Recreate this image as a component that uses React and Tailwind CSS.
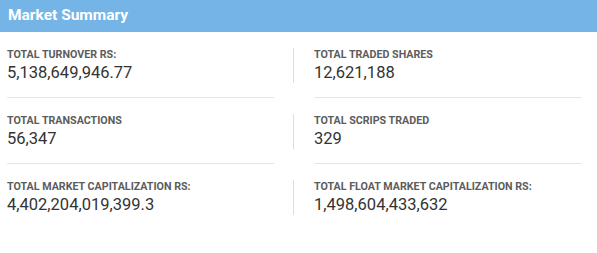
import React from "react";

const rows = [
  [
    ["TOTAL TURNOVER RS:", "5,138,649,946.77"],
    ["TOTAL TRADED SHARES", "12,621,188"],
  ],
  [
    ["TOTAL TRANSACTIONS", "56,347"],
    ["TOTAL SCRIPS TRADED", "329"],
  ],
  [
    ["TOTAL MARKET CAPITALIZATION RS:", "4,402,204,019,399.3"],
    ["TOTAL FLOAT MARKET CAPITALIZATION RS:", "1,498,604,433,632"],
  ],
];

function Item({ label, value }) {
  return (
    <div className="h-[35px]">
      <div className="text-[10.7px] leading-[14px] font-bold text-[#5c5c5c]">{label}</div>
      <div className="text-[16.5px] leading-[21px] text-[#333333]">{value}</div>
    </div>
  );
}

export default function App() {
  return (
    <div className="w-[597px] h-[253px] bg-white font-['Roboto',sans-serif]">
      <div className="h-[32px] bg-[#74b4e6] pl-[8px] pb-[1px] flex items-center text-white font-bold text-[15.5px]">
        Market Summary
      </div>
      <div className="pt-[16px] flex flex-col">
        {rows.map((row, i) => (
          <div key={i} className={"flex " + (i < rows.length - 1 ? "mb-[16px]" : "")}>
            <div className="w-[293px] pl-[7px] pr-[19px]">
              <Item label={row[0][0]} value={row[0][1]} />
              {i < rows.length - 1 && <div className="mt-[14px] h-px bg-[#e6e6e6]" />}
            </div>
            <div className="w-[304px]">
              <div className="border-l border-[#dddddd] pl-[20px]">
                <Item label={row[1][0]} value={row[1][1]} />
              </div>
              {i < rows.length - 1 && <div className="mt-[14px] ml-[21px] w-[268px] h-px bg-[#e6e6e6]" />}
            </div>
          </div>
        ))}
      </div>
    </div>
  );
}
